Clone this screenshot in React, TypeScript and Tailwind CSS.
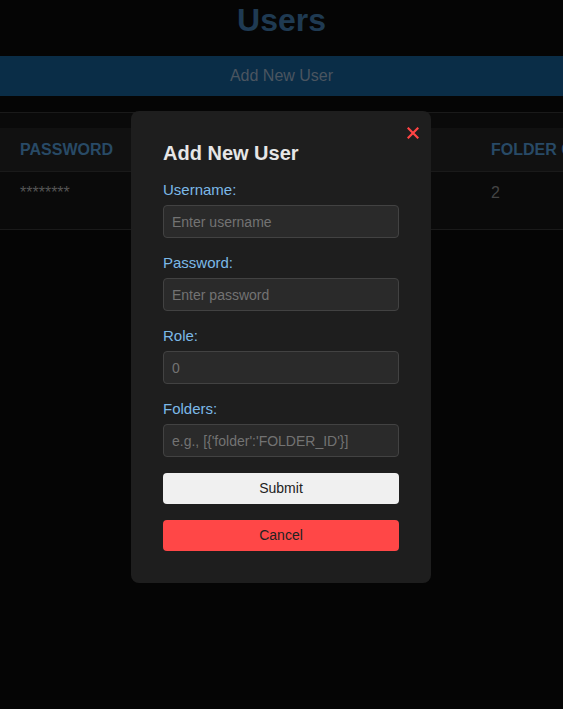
import React from "react";

const font = { fontFamily: '"Liberation Sans", Arial, sans-serif' };

function Field({ label, placeholder, type = "text" }: { label: string; placeholder: string; type?: string }) {
  return (
    <div className="mb-4 flex flex-col">
      <label className="mb-[7px] block text-[15px] leading-[17px] text-[#7cb9e8]">{label}</label>
      <input
        type={type}
        placeholder={placeholder}
        className="box-border h-[33px] w-full rounded-[4px] border border-[#424242] bg-[#2a2a2a] px-2 text-[14px] text-[#ddd] outline-none placeholder:text-[#737373]"
      />
    </div>
  );
}

export default function App() {
  return (
    <div className="relative h-[709px] w-[563px] overflow-hidden bg-[#050505]" style={font}>
      {/* page under the modal (shown dimmed) */}
      <h1 className="mt-[2px] text-center text-[32px] font-bold leading-[37px] text-[#1f3a52]">Users</h1>
      <div className="mt-[17px] flex h-10 w-full items-center justify-center bg-[#0a2d47] text-[16px] text-[#4a5560]">
        Add New User
      </div>
      <div className="mt-4 border-y border-[#1a1a1a] bg-[#0a0a0a] pt-[15px]">
        <table className="w-[640px] border-collapse text-left">
          <thead>
            <tr className="h-[43px] border-b border-[#1a1a1a] bg-[#111111]">
              <th className="w-[235px] pl-5 pt-[2px] align-middle text-[16px] font-bold text-[#284a66]">PASSWORD</th>
              <th className="w-[236px] pl-5 align-middle text-[16px] font-bold text-[#284a66]"></th>
              <th className="pl-5 pt-[2px] align-middle text-[16px] font-bold whitespace-nowrap text-[#284a66]">FOLDER COUNT</th>
            </tr>
          </thead>
          <tbody>
            <tr className="h-[58px]">
              <td className="pl-5 pt-[12px] align-top text-[16px] leading-[18px] text-[#555]">********</td>
              <td className="pl-5 pt-[12px] align-top text-[16px] leading-[18px] text-[#444]"></td>
              <td className="pl-5 pt-[12px] align-top text-[16px] leading-[18px] text-[#444]">2</td>
            </tr>
          </tbody>
        </table>
      </div>

      {/* modal */}
      <div className="absolute inset-0 flex justify-start pl-[131px] pt-[111px]">
        <div className="relative h-[472px] w-[300px] rounded-[8px] bg-[#1e1e1e] px-8 pt-[30px] pb-8">
          <button className="absolute right-[12px] top-[16px] flex h-[12px] w-[12px] items-center justify-center">
            <svg width="12" height="12" viewBox="0 0 12 12">
              <path d="M1.5 1.5 L10.5 10.5 M10.5 1.5 L1.5 10.5" stroke="#ff4444" strokeWidth="2.2" strokeLinecap="square" />
            </svg>
          </button>
          <h2 className="mb-4 text-[20px] font-bold leading-[24px] text-[#e6e6e6]">Add New User</h2>
          <Field label="Username:" placeholder="Enter username" />
          <Field label="Password:" placeholder="Enter password" type="password" />
          <Field label="Role:" placeholder="0" />
          <Field label="Folders:" placeholder="e.g., [{'folder':'FOLDER_ID'}]" />
          <button className="mb-4 block h-[31px] w-full rounded-[4px] bg-[#f0f0f0] text-[14px] text-[#222]">Submit</button>
          <button className="block h-[31px] w-full rounded-[4px] bg-[#ff4747] text-[14px] text-[#222]">Cancel</button>
        </div>
      </div>
    </div>
  );
}
